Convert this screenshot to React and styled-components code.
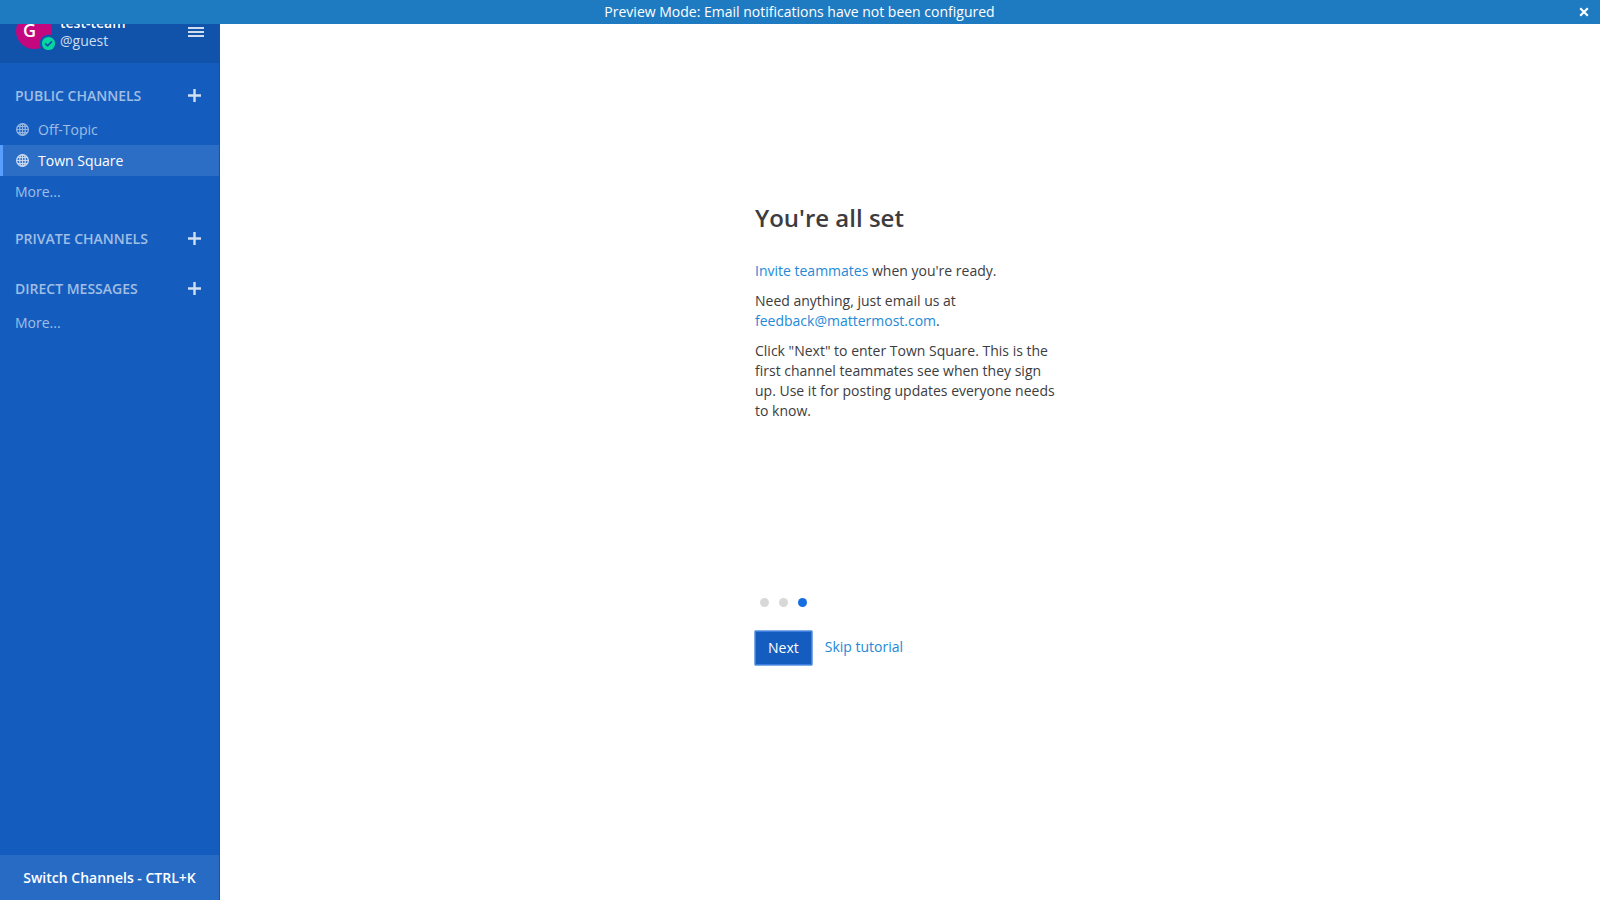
import React from "react";
import styled, { createGlobalStyle } from "styled-components";

const GlobalStyle = createGlobalStyle`
  * { box-sizing: border-box; }
  body {
    margin: 0;
    background: #fff;
    color: #3d3c40;
    font: 14px/20px "Open Sans", sans-serif;
  }
  a { color: #2389d7; text-decoration: none; }
  button { font: inherit; cursor: pointer; }
  h1, h2, p, ul { margin: 0; padding: 0; }
`;

const Banner = styled.div`
  position: fixed;
  inset: 0 0 auto;
  z-index: 2;
  display: flex;
  align-items: center;
  height: 24px;
  padding-right: 11px;
  background: #1f7bc1;
  color: #fff;
`;

const BannerText = styled.span`
  flex: 1;
  padding-left: 20px;
  text-align: center;
`;

const IconButton = styled.button`
  display: flex;
  padding: 0;
  border: 0;
  background: none;
  color: inherit;
`;

const Layout = styled.div`
  display: flex;
  min-height: 100vh;
`;

const Sidebar = styled.aside`
  display: flex;
  flex-direction: column;
  flex: 0 0 220px;
  border-right: 1px solid #1254ac;
  background: #145dbf;
  color: #a1bee5;
`;

const TeamHeader = styled.header`
  display: flex;
  align-items: flex-start;
  height: 63px;
  padding: 13px 15px 0 16px;
  background: #1153ab;
  color: #cfddee;
`;

const Avatar = styled.div`
  position: relative;
  width: 36px;
  height: 36px;
  border-radius: 50%;
  background: #c4077e;
  color: #fff;
  font-size: 18px;
  font-weight: 600;
  line-height: 34px;
  text-align: center;
  padding-right: 9px;
`;

const StatusBadge = styled.svg`
  position: absolute;
  right: -6px;
  bottom: -4px;
`;

const TeamInfo = styled.div`
  flex: 1;
  margin-left: 8px;
  padding-top: 1px;
  line-height: 18px;
`;

const TeamName = styled.h1`
  color: #fff;
  font-size: 14px;
  font-weight: 600;
  line-height: 18px;
`;

const MenuButton = styled(IconButton)`
  margin-top: 11px;
`;

const Channels = styled.nav`
  display: flex;
  flex: 1;
  flex-direction: column;
  gap: 22px;
  padding-top: 23px;
`;

const SectionHeader = styled.div`
  display: flex;
  align-items: flex-start;
  justify-content: space-between;
  margin-bottom: 8px;
  padding: 0 18px 0 15px;
`;

const SectionTitle = styled.h2`
  font-size: 14px;
  font-weight: 600;
`;

const AddButton = styled(IconButton)`
  padding-top: 3px;
  color: #d0dff2;
`;

const ChannelList = styled.ul`
  list-style: none;
`;

const ChannelLink = styled.a`
  display: flex;
  align-items: center;
  gap: 9px;
  height: 31px;
  padding-left: ${({ $active }) => ($active ? 13 : 16)}px;
  border-left: ${({ $active }) => ($active ? "3px solid #579eff" : "0")};
  background: ${({ $active }) => ($active ? "#2c6dc5" : "none")};
  color: ${({ $active }) => ($active ? "#fff" : "#a1bee5")};
`;

const MoreLink = styled.a`
  display: block;
  padding-left: 15px;
  color: #a1bee5;
  line-height: 31px;
`;

const SwitchButton = styled.button`
  height: 45px;
  padding: 0;
  border: 0;
  background: #286bc4;
  color: #fff;
  font-weight: 600;
`;

const Main = styled.main`
  display: flex;
  flex: 1;
  align-items: center;
  justify-content: center;
  padding: 24px 0 55px;
`;

const Tutorial = styled.section`
  width: 310px;
`;

const TutorialText = styled.div`
  display: flex;
  flex-direction: column;
  gap: 10px;
  min-height: 393px;
`;

const TutorialTitle = styled.h2`
  margin-bottom: 20px;
  font-size: 24px;
  font-weight: 600;
  line-height: 26px;
`;

const Dots = styled.div`
  display: flex;
  gap: 10px;
  margin: 0 0 24px 5px;
`;

const Dot = styled.button`
  width: 9px;
  height: 9px;
  padding: 0;
  border: 0;
  border-radius: 50%;
  background: ${({ $active }) => ($active ? "#166de0" : "#d8d8d8")};
`;

const Actions = styled.div`
  display: flex;
  align-items: flex-start;
  gap: 13px;
`;

const SkipLink = styled.a`
  line-height: 32px;
`;

const NextButton = styled.button`
  height: 34px;
  padding: 0 13px;
  border: 0;
  border-radius: 1px;
  background: #145dbf;
  color: #fff;
  box-shadow: 0 0 0 1px #80aae8, inset 0 0 0 1px #3f7fe0;
`;

const GlobeIcon = ({ color }) => (
  <svg width="13" height="13" viewBox="0 0 13 13" fill="none" stroke={color} aria-hidden="true">
    <circle cx="6.5" cy="6.5" r="5.8" strokeWidth="1.4" />
    <ellipse cx="6.5" cy="6.5" rx="2.8" ry="5.8" strokeWidth="1.3" />
    <path d="M6.5 .5v12M.5 6.5h12M1.5 3.5h10M1.5 9.5h10" strokeWidth="1.2" />
  </svg>
);

const PlusIcon = () => (
  <svg width="13" height="13" viewBox="0 0 13 13" aria-hidden="true">
    <path d="M5.3 0h2.4v5.3H13v2.4H7.7V13H5.3V7.7H0V5.3h5.3z" fill="currentColor" />
  </svg>
);

const Section = ({ title, children }) => (
  <section>
    <SectionHeader>
      <SectionTitle>{title}</SectionTitle>
      <AddButton aria-label={`Add to ${title.toLowerCase()}`}><PlusIcon /></AddButton>
    </SectionHeader>
    {children}
  </section>
);

export default function App() {
  return (
    <>
      <GlobalStyle />
      <Banner>
        <BannerText>Preview Mode: Email notifications have not been configured</BannerText>
        <IconButton aria-label="Close">
          <svg width="10" height="10" viewBox="0 0 10 10" stroke="#fff" strokeWidth="2.1" aria-hidden="true">
            <path d="M1.2 1.2l7.6 7.6M8.8 1.2l-7.6 7.6" />
          </svg>
        </IconButton>
      </Banner>
      <Layout>
        <Sidebar>
          <TeamHeader>
            <Avatar>
              G
              <StatusBadge width="19" height="19" viewBox="0 0 19 19" aria-hidden="true">
                <circle cx="9.5" cy="9.5" r="9" fill="#1153ab" />
                <circle cx="9.5" cy="9.5" r="6.6" fill="#06d6a0" />
                <path d="M6.2 9.4l2.4 2.4 4.3-4.5" fill="none" stroke="#1153ab" strokeWidth="1.8" />
              </StatusBadge>
            </Avatar>
            <TeamInfo>
              <TeamName>test-team</TeamName>
              @guest
            </TeamInfo>
            <MenuButton aria-label="Main menu">
              <svg width="16" height="16" viewBox="0 0 16 16" aria-hidden="true">
                <path d="M0 3h16v2H0zM0 7h16v2H0zM0 11h16v2H0z" fill="currentColor" />
              </svg>
            </MenuButton>
          </TeamHeader>
          <Channels>
            <Section title="PUBLIC CHANNELS">
              <ChannelList>
                <li><ChannelLink href="#off-topic"><GlobeIcon color="#92b4e2" />Off-Topic</ChannelLink></li>
                <li><ChannelLink href="#town-square" $active><GlobeIcon color="#c5d7f0" />Town Square</ChannelLink></li>
                <li><MoreLink href="#channels">More...</MoreLink></li>
              </ChannelList>
            </Section>
            <Section title="PRIVATE CHANNELS" />
            <Section title="DIRECT MESSAGES">
              <MoreLink href="#messages">More...</MoreLink>
            </Section>
          </Channels>
          <SwitchButton>Switch Channels - CTRL+K</SwitchButton>
        </Sidebar>
        <Main>
          <Tutorial>
            <TutorialText>
              <TutorialTitle>You're all set</TutorialTitle>
              <p><a href="#invite">Invite teammates</a> when you're ready.</p>
              <p>
                Need anything, just email us at{" "}
                <a href="mailto:feedback@mattermost.com">feedback@mattermost.com</a>.
              </p>
              <p>
                Click "Next" to enter Town Square. This is the first channel teammates see when
                they sign up. Use it for posting updates everyone needs to know.
              </p>
            </TutorialText>
            <Dots>
              <Dot aria-label="Step 1" />
              <Dot aria-label="Step 2" />
              <Dot aria-label="Step 3" $active />
            </Dots>
            <Actions>
              <NextButton>Next</NextButton>
              <SkipLink href="#skip">Skip tutorial</SkipLink>
            </Actions>
          </Tutorial>
        </Main>
      </Layout>
    </>
  );
}
